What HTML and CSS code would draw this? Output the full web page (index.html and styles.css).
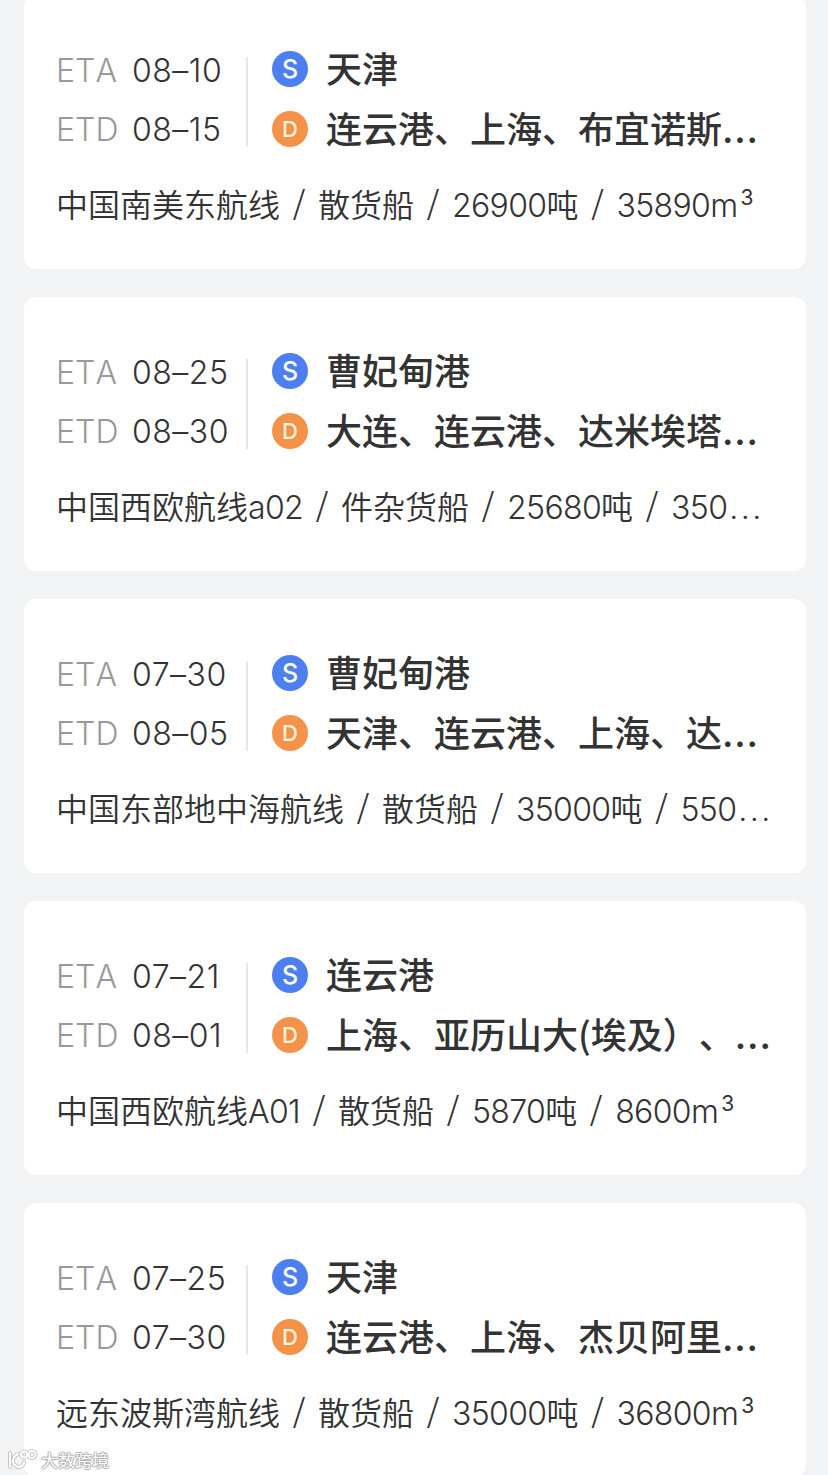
FILE: index.html
```html
<!DOCTYPE html>
<html lang="zh-CN">
<head>
<meta charset="utf-8">
<title>船期</title>
<link rel="stylesheet" href="styles.css">
</head>
<body>
<main class="list">
  <article class="card">
    <div class="schedule">
      <div class="dates"><div class="date"><span class="label">ETA</span><span class="day">08–10</span></div><div class="date"><span class="label">ETD</span><span class="day">08–15</span></div></div>
      <div class="divider"></div>
      <div class="ports"><div class="port"><span class="badge start">S</span><span class="name">天津</span></div><div class="port"><span class="badge dest">D</span><span class="name">连云港、上海、布宜诺斯<span class="dots">...</span></span></div></div>
    </div>
    <div class="info"><span>中国南美东航线</span><span class="slash">/</span><span>散货船</span><span class="slash">/</span><span><span class="num">26900</span>吨</span><span class="slash">/</span><span class="num">35890m<span class="cube">3</span></span></div>
  </article>
  <article class="card">
    <div class="schedule">
      <div class="dates"><div class="date"><span class="label">ETA</span><span class="day">08–25</span></div><div class="date"><span class="label">ETD</span><span class="day">08–30</span></div></div>
      <div class="divider"></div>
      <div class="ports"><div class="port"><span class="badge start">S</span><span class="name">曹妃甸港</span></div><div class="port"><span class="badge dest">D</span><span class="name">大连、连云港、达米埃塔<span class="dots">...</span></span></div></div>
    </div>
    <div class="info"><span>中国西欧航线<span class="num">a02</span></span><span class="slash">/</span><span>件杂货船</span><span class="slash">/</span><span><span class="num">25680</span>吨</span><span class="slash">/</span><span class="num">350<span class="dots">...</span></span></div>
  </article>
  <article class="card">
    <div class="schedule">
      <div class="dates"><div class="date"><span class="label">ETA</span><span class="day">07–30</span></div><div class="date"><span class="label">ETD</span><span class="day">08–05</span></div></div>
      <div class="divider"></div>
      <div class="ports"><div class="port"><span class="badge start">S</span><span class="name">曹妃甸港</span></div><div class="port"><span class="badge dest">D</span><span class="name">天津、连云港、上海、达<span class="dots">...</span></span></div></div>
    </div>
    <div class="info"><span>中国东部地中海航线</span><span class="slash">/</span><span>散货船</span><span class="slash">/</span><span><span class="num">35000</span>吨</span><span class="slash">/</span><span class="num">550<span class="dots">...</span></span></div>
  </article>
  <article class="card">
    <div class="schedule">
      <div class="dates"><div class="date"><span class="label">ETA</span><span class="day">07–21</span></div><div class="date"><span class="label">ETD</span><span class="day">08–01</span></div></div>
      <div class="divider"></div>
      <div class="ports"><div class="port"><span class="badge start">S</span><span class="name">连云港</span></div><div class="port"><span class="badge dest">D</span><span class="name">上海、亚历山大(埃及）、<span class="dots">...</span></span></div></div>
    </div>
    <div class="info"><span>中国西欧航线<span class="num">A01</span></span><span class="slash">/</span><span>散货船</span><span class="slash">/</span><span><span class="num">5870</span>吨</span><span class="slash">/</span><span class="num">8600m<span class="cube">3</span></span></div>
  </article>
  <article class="card">
    <div class="schedule">
      <div class="dates"><div class="date"><span class="label">ETA</span><span class="day">07–25</span></div><div class="date"><span class="label">ETD</span><span class="day">07–30</span></div></div>
      <div class="divider"></div>
      <div class="ports"><div class="port"><span class="badge start">S</span><span class="name">天津</span></div><div class="port"><span class="badge dest">D</span><span class="name">连云港、上海、杰贝阿里<span class="dots">...</span></span></div></div>
    </div>
    <div class="info"><span>远东波斯湾航线</span><span class="slash">/</span><span>散货船</span><span class="slash">/</span><span><span class="num">35000</span>吨</span><span class="slash">/</span><span class="num">36800m<span class="cube">3</span></span></div>
  </article>
</main>
<div class="watermark">
  <svg class="mark" viewBox="0 0 32 22" width="32" height="22">
    <g class="halo"><path d="M3 4v14M9 6c-4 4-4 8-1 10 4 4 9 1 9-3M9 6l2-1"/><circle cx="17" cy="5.5" r="3"/><circle cx="25" cy="5.5" r="3.5"/></g>
    <g class="line"><path d="M3 4v14M9 6c-4 4-4 8-1 10 4 4 9 1 9-3M9 6l2-1"/><circle cx="17" cy="5.5" r="3"/><circle cx="25" cy="5.5" r="3.5"/></g>
  </svg>
  <span class="brand">大数跨境</span>
</div>
</body>
</html>
```
FILE: styles.css
```css
* { box-sizing: border-box; }
html, body { height: 1475px; overflow: hidden; }
body {
  margin: 0;
  position: relative;
  background: #f2f3f5;
  color: #333;
  font-family: Inter, "Noto Sans CJK SC", sans-serif;
}
.list {
  display: flex;
  flex-direction: column;
  gap: 28px;
  margin-top: -5px;
  padding: 0 22px 0 24px;
}
.card {
  flex: none;
  height: 274px;
  padding: 44px 0 0 32px;
  background: #fff;
  border-radius: 12px;
}
.schedule { display: flex; height: 120px; }
.dates { width: 190px; padding-top: 1px; }
.date {
  display: flex;
  height: 59px;
  line-height: 61px;
  font-size: 32px;
  font-weight: 300;
}
.label { width: 76px; color: #999; font-kerning: none; }
.day { color: #333; font-weight: 350; letter-spacing: 0.5px; }
.divider { width: 2px; height: 90px; margin-top: 18px; background: #e8e8e8; }
.ports { padding-left: 24px; }
.port { display: flex; align-items: center; height: 60px; }
.badge {
  width: 36px;
  height: 36px;
  margin-right: 18px;
  border-radius: 50%;
  color: #fff;
  font-size: 25px;
  font-weight: 500;
  line-height: 37px;
  text-align: center;
}
.start { background: #4e7ff0; }
.dest { background: #f5924a; color: #fff3df; font-size: 22px; }
.name {
  height: 60px;
  margin-top: -4px;
  font-family: "Noto Sans CJK SC", sans-serif;
  font-size: 36px;
  font-weight: 500;
  line-height: 60px;
  white-space: nowrap;
  text-spacing-trim: space-all;
}
.name .dots { font-family: Inter, sans-serif; font-weight: 600; letter-spacing: 0.8px; line-height: 1; }
.info {
  display: flex;
  align-items: baseline;
  height: 48px;
  margin-top: 20px;
  font-family: "Noto Sans CJK SC", sans-serif;
  font-size: 32px;
  font-weight: 350;
  line-height: 48px;
  white-space: nowrap;
}
.slash { width: 38px; padding-bottom: 3px; text-align: center; transform: translateY(-3px); }
.num {
  font-family: Inter, sans-serif;
  font-weight: 300;
  line-height: 1;
  letter-spacing: -0.65px;
}
.info .dots { margin-left: 2px; letter-spacing: 2.5px; }
.cube { position: relative; top: -12px; margin-left: 3px; font-size: 21px; font-weight: 400; line-height: 1; }
.watermark {
  position: absolute;
  left: 7px;
  bottom: 3px;
  display: flex;
  align-items: center;
  gap: 2px;
}
.mark { fill: none; stroke-linecap: round; }
.halo { stroke: #c6c6c6; stroke-width: 4; }
.line { stroke: #fff; stroke-width: 2; }
.brand {
  color: #fff;
  font: 400 17px/24px "Noto Sans CJK SC", sans-serif;
  text-shadow: 1px 0 1px #aaa, -1px 0 1px #aaa, 0 1px 1px #aaa, 0 -1px 1px #aaa;
}
```
